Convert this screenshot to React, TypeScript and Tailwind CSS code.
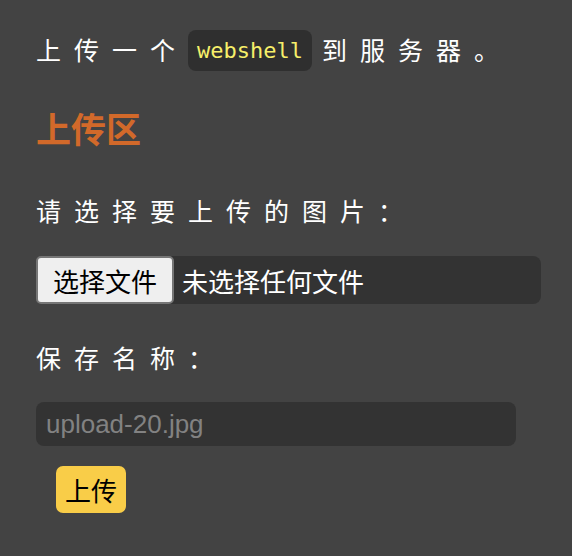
export default function App() {
  return (
    <div className="min-h-screen bg-[#434343] text-white px-[36px] pt-[28px] font-['Noto_Sans_CJK_SC','Liberation_Sans',sans-serif]">
      <p className="flex items-center text-[25px] tracking-[13px] h-[44px]">
        上传一个
        <code className="px-[9px] py-[5px] rounded-[8px] bg-[#2f2f2f] text-[#f6ef6a] text-[22px] leading-[31px] tracking-normal font-['DejaVu_Sans_Mono',monospace] mr-[10px]">
          webshell
        </code>
        到服务器。
      </p>

      <h2 className="mt-[36px] text-[35px] font-bold text-[#d2692a] leading-[40px]">上传区</h2>

      <p className="mt-[44px] text-[25px] tracking-[13px] leading-[36px]">请选择要上传的图片：</p>

      <div className="mt-[28px] flex items-center h-[48px] w-[505px] rounded-[8px] bg-[#333333]">
        <span className="h-[48px] px-[15px] flex items-center bg-[#efefef] text-black text-[26px] rounded-[5px] border-2 border-[#767676]">
          选择文件
        </span>
        <span className="ml-[8px] text-[26px]">未选择任何文件</span>
      </div>

      <p className="mt-[35px] text-[25px] tracking-[13px] leading-[36px]">保存名称：</p>

      <div className="mt-[27px] flex items-center h-[44px] w-[480px] rounded-[8px] bg-[#333333] px-[10px]">
        <span className="text-[26px] text-[#828282] font-['Liberation_Sans',sans-serif]">upload-20.jpg</span>
      </div>

      <button className="mt-[20px] ml-[20px] h-[47px] px-[9px] rounded-[7px] bg-[#f9cd48] text-black text-[26px]">
        上传
      </button>
    </div>
  );
}
